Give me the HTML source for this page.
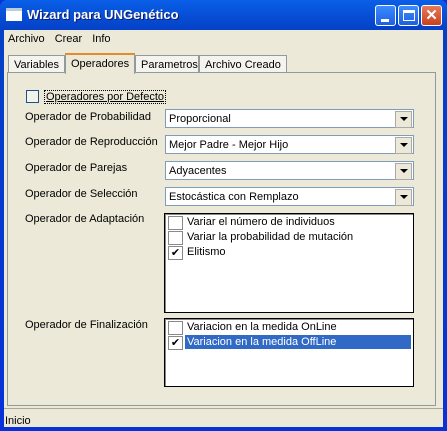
<!DOCTYPE html>
<html><head><style>
*{box-sizing:border-box;margin:0;padding:0}
body{width:447px;height:431px;overflow:hidden;font-family:"Liberation Sans",sans-serif;font-size:11px;background:#0831d9}
.win{position:absolute;left:0;top:0;width:447px;height:431px;background:linear-gradient(#0a5fe8,#0441c6 30px,#0831d9);border-radius:7px 7px 0 0}
.title{position:absolute;left:27px;top:7px;color:#fff;font-weight:bold;font-size:13px;text-shadow:1px 1px #0a1e6e}
.ico{position:absolute;left:6px;top:8px;width:16px;height:13px;background:#fff;border-top:3px solid #bcd}
.btn{position:absolute;top:5px;width:21px;height:21px;border:1px solid #fff;border-radius:3px;background:linear-gradient(#3c8cff,#1f5fe0)}
.client{position:absolute;left:4px;top:30px;width:439px;height:397px;background:#ece9d8}
.menu{position:absolute;top:3px;left:4px}
.menu span{margin-right:10px}
.tabs{position:absolute;top:23px;left:4px;height:20px}
.tab{position:absolute;top:2px;height:18px;border:1px solid #919b9c;border-bottom:none;background:#f4f3ee;padding:3px 5px 0;white-space:nowrap}
.panel{position:absolute;left:3px;top:42px;width:429px;height:334px;border:1px solid #919b9c;background:#ece9d8}
.lbl{position:absolute;left:17px}
.combo{position:absolute;left:157px;width:249px;height:19px;border:1px solid #7f9db9;background:#fff;padding:3px 3px 0;line-height:13px}
.combo:after{content:"";position:absolute;right:1px;top:1px;width:15px;height:15px;background:#ece9d8;border:1px solid #aaa}
.combo i{position:absolute;right:5px;top:7px;border-left:4px solid transparent;border-right:4px solid transparent;border-top:4px solid #000;z-index:2}
.list{position:absolute;left:156px;width:250px;border:1px solid #000;background:#fff;box-shadow:inset 1px 1px #888}
.it{height:15px;position:relative;padding-left:22px;line-height:14px}
.it b{position:absolute;left:3px;top:1px;width:15px;height:14px;border:1px solid #888;background:#fff;font-weight:normal;font-size:11px;text-align:center;line-height:12px}
.sel{background:#316ac5;color:#fff;margin-right:2px}
.status{position:absolute;left:0;top:378px;width:439px;height:19px;border-top:1px solid #aca899;padding:6px 1px 0}
</style></head><body>
<div class="win">
<div class="ico"></div><div class="title">Wizard para UNGenético</div>
<div class="btn" style="left:375px"><div style="position:absolute;left:5px;top:13px;width:8px;height:3px;background:#fff"></div></div>
<div class="btn" style="left:398px"><div style="position:absolute;left:4px;top:4px;width:12px;height:11px;border:1px solid #fff;border-top-width:3px"></div></div>
<div class="btn" style="left:421px;background:linear-gradient(#e87a5a,#c8401f);color:#fff;font-weight:bold;font-size:15px;text-align:center;line-height:19px">✕</div>
<div class="client">
<div class="menu"><span>Archivo</span><span>Crear</span><span>Info</span></div>
<div class="tabs">
<div class="tab" style="left:0;width:57px">Variables</div>
<div class="tab" style="left:127px;width:64px">Parametros</div>
<div class="tab" style="left:191px;width:88px">Archivo Creado</div>
<div class="tab" style="left:57px;width:70px;top:0;height:21px;background:#ece9d8;border-top:2px solid #e68b2c;z-index:3">Operadores</div>
</div>
<div class="panel">
<div style="position:absolute;left:18px;top:17px;width:13px;height:13px;border:1px solid #1c5180;background:#f3f3ee"></div>
<div style="position:absolute;left:36px;top:17px;text-decoration:underline;border:1px dotted #000;padding:0 1px;line-height:12px">Operadores por Defecto</div>
<div class="lbl" style="top:38px">Operador de Probabilidad</div>
<div class="combo" style="top:36px">Proporcional<i></i></div>
<div class="lbl" style="top:63px">Operador de Reproducción</div>
<div class="combo" style="top:62px">Mejor Padre - Mejor Hijo<i></i></div>
<div class="lbl" style="top:89px">Operador de Parejas</div>
<div class="combo" style="top:88px">Adyacentes<i></i></div>
<div class="lbl" style="top:115px">Operador de Selección</div>
<div class="combo" style="top:114px">Estocástica con Remplazo<i></i></div>
<div class="lbl" style="top:140px">Operador de Adaptación</div>
<div class="list" style="top:140px;height:100px;padding-top:1px">
<div class="it"><b></b>Variar el número de individuos</div>
<div class="it"><b></b>Variar la probabilidad de mutación</div>
<div class="it"><b>✔</b>Elitismo</div>
</div>
<div class="lbl" style="top:246px">Operador de Finalización</div>
<div class="list" style="top:245px;height:69px;padding-top:1px">
<div class="it"><b></b>Variacion en la medida OnLine</div>
<div class="it"><b>✔</b><div class="sel" style="position:absolute;left:20px;top:0;right:0;padding-left:2px">Variacion en la medida OffLine</div></div>
</div>
</div>
<div class="status">Inicio</div>
</div>
</div>
</body></html>
